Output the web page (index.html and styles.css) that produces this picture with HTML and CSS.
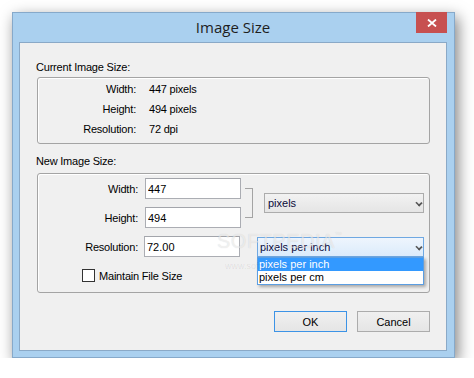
FILE: index.html
```html
<!DOCTYPE html>
<html>
<head>
<meta charset="utf-8">
<link rel="stylesheet" href="styles.css">
</head>
<body>
<div class="window">
  <div class="titlebar">
    <span class="title">Image Size</span>
    <div class="close">
      <svg width="10" height="8" viewBox="0 0 10 8"><path d="M1 0.5 L9 7.5 M9 0.5 L1 7.5" stroke="#fff" stroke-width="1.8" fill="none"/></svg>
    </div>
  </div>
  <div class="client">
    <div class="section-label first">Current Image Size:</div>
    <div class="group g1">
      <div class="info-row"><span class="lbl">Width:</span><span class="val">447 pixels</span></div>
      <div class="info-row"><span class="lbl">Height:</span><span class="val">494 pixels</span></div>
      <div class="info-row"><span class="lbl">Resolution:</span><span class="val">72 dpi</span></div>
    </div>
    <div class="section-label second">New Image Size:</div>
    <div class="group g2">
      <div class="form-grid">
        <span class="flbl r1">Width:</span>
        <input class="field r1" type="text" value="447">
        <span class="flbl r2">Height:</span>
        <input class="field r2" type="text" value="494">
        <div class="bracket"></div>
        <div class="combo units"><span>pixels</span><span class="chev"></span></div>
        <span class="flbl r3">Resolution:</span>
        <input class="field r3 res" type="text" value="72.00">
        <div class="combo res-combo focused"><span>pixels per inch</span><span class="chev"></span>
          <div class="droplist">
            <div class="opt sel">pixels per inch</div>
            <div class="opt">pixels per cm</div>
          </div>
        </div>
      </div>
      <div class="check-row"><span class="checkbox"></span><span>Maintain File Size</span></div>
    </div>
    <div class="buttons">
      <div class="btn default">OK</div>
      <div class="btn">Cancel</div>
    </div>
    <div class="watermark">SOFTPEDIA<sup>™</sup></div>
    <div class="watermark-url">www.softpedia.com</div>
  </div>
</div>
</body>
</html>
```
FILE: styles.css
```css
html, body {
  margin: 0;
  background: #ffffff;
}
body {
  padding: 12px 0 0 12px;
  font-family: "Liberation Sans", Arial, sans-serif;
  font-size: 11px;
  color: #000;
}
.window {
  width: 443px;
  height: 346px;
  box-sizing: border-box;
  background: #aad0ef;
  border: 1px solid #86a9ca;
  box-shadow: 3px 5px 14px rgba(0, 0, 0, 0.5);
  padding: 0 7px 6px 6px;
  display: flex;
  flex-direction: column;
}
.titlebar {
  height: 29px;
  position: relative;
  display: flex;
  justify-content: center;
  align-items: center;
}
.title {
  font-family: "Open Sans", "Noto Sans", sans-serif;
  font-size: 15px;
  color: #1e1e1e;
  margin-top: -1px;
}
.close {
  position: absolute;
  right: 0;
  top: -1px;
  width: 31px;
  height: 21px;
  background: #c75050;
  display: flex;
  align-items: center;
  justify-content: center;
}
.client {
  flex: 1;
  position: relative;
  background: #f0f0f0;
  border: 1px solid #8aa9c7;
  padding: 0 16px 0 17px;
  display: flex;
  flex-direction: column;
}
.section-label {
  line-height: 13px;
  margin-left: -1px;
  letter-spacing: -0.2px;
}
.section-label.first { margin-top: 18px; }
.section-label.second { margin-top: 11px; }
.group {
  border: 1px solid #a4a4a4;
  border-radius: 3px;
  box-shadow: inset 1px 1px 0 #fff;
}
.g1 {
  margin-top: 3px;
  padding: 1px 0 4px 0;
}
.info-row {
  display: flex;
  height: 20px;
  align-items: center;
}
.info-row .lbl {
  width: 98px;
  text-align: right;
  letter-spacing: -0.2px;
}
.info-row .val {
  margin-left: 13px;
  letter-spacing: -0.2px;
}
.g2 {
  margin-top: 5px;
  padding: 4px 0 10px 0;
}
.form-grid {
  display: grid;
  grid-template-columns: 107px 100px 19px 160px;
  grid-template-rows: 21px 21px 21px;
  row-gap: 8px;
}
.flbl {
  grid-column: 1;
  text-align: right;
  padding-right: 7px;
  align-self: center;
  letter-spacing: -0.2px;
}
.r1 { grid-row: 1; }
.r2 { grid-row: 2; }
.r3 { grid-row: 3; }
.field {
  grid-column: 2;
  width: 96px;
  height: 21px;
  box-sizing: border-box;
  border: 1px solid #abadb3;
  border-top-color: #a3a5ab;
  background: #fff;
  font-family: "Liberation Sans", Arial, sans-serif;
  font-size: 11px;
  padding: 0 2px;
  margin: 0;
  outline: none;
  color: #000;
}
.field.res { margin-left: -1px; }
.bracket {
  grid-column: 3;
  grid-row: 1 / 3;
  align-self: start;
  margin-top: 10px;
  width: 8px;
  height: 30px;
  box-sizing: border-box;
  border: 1px solid #a4a4a4;
  border-left: none;
}
.combo {
  position: relative;
  height: 20px;
  box-sizing: border-box;
  border: 1px solid #acacac;
  background: linear-gradient(#f2f2f2, #e5e5e5);
  display: flex;
  align-items: center;
  padding-left: 3px;
  color: #0b0b3a;
}
.units {
  grid-column: 4;
  grid-row: 1 / 3;
  align-self: center;
}
.res-combo {
  grid-column: 3 / 5;
  grid-row: 3;
  justify-self: end;
  align-self: end;
  width: 167px;
  padding-left: 2px;
}
.combo.focused {
  border-color: #6fa8e2;
  background: linear-gradient(#eef5fd, #dbebfb);
}
.chev {
  position: absolute;
  right: 1px;
  top: 6px;
  width: 4px;
  height: 4px;
  border-right: 2px solid #555;
  border-bottom: 2px solid #555;
  transform: rotate(45deg) scale(0.9, 0.8);
  transform-origin: center;
}
.droplist {
  position: absolute;
  left: -1px;
  right: -1px;
  top: 19px;
  border: 1px solid #5b9ee2;
  background: #fff;
  box-shadow: 2px 2px 3px rgba(0, 0, 0, 0.3);
  z-index: 2;
}
.opt {
  height: 13px;
  line-height: 13px;
  padding-left: 1px;
  color: #000;
}
.opt.sel {
  background: #3399ff;
  color: #fff;
}
.check-row {
  display: flex;
  align-items: center;
  margin-top: 12px;
  margin-left: 44px;
  height: 13px;
  letter-spacing: -0.2px;
}
.checkbox {
  width: 13px;
  height: 13px;
  box-sizing: border-box;
  border: 1px solid #333;
  background: #fff;
  margin-right: 4px;
}
.buttons {
  display: flex;
  justify-content: flex-end;
  gap: 10px;
  margin-top: 18px;
}
.btn {
  width: 73px;
  height: 21px;
  box-sizing: border-box;
  border: 1px solid #acacac;
  background: linear-gradient(#f0f0f0, #e5e5e5);
  display: flex;
  align-items: center;
  justify-content: center;
}
.btn.default {
  border-color: #3c93e6;
}
.watermark {
  position: absolute;
  left: 197px;
  top: 187px;
  font-family: "Liberation Sans", Arial, sans-serif;
  font-size: 20px;
  letter-spacing: 0.5px;
  color: rgba(255, 255, 255, 0.55);
  text-shadow: 0 0 1px rgba(0, 0, 0, 0.15);
  pointer-events: none;
  z-index: 3;
}
.watermark sup {
  font-size: 7px;
  vertical-align: 11px;
}
.watermark-url {
  position: absolute;
  left: 205px;
  top: 218px;
  font-size: 9px;
  color: rgba(0, 0, 0, 0.09);
  pointer-events: none;
  z-index: 3;
}
```
